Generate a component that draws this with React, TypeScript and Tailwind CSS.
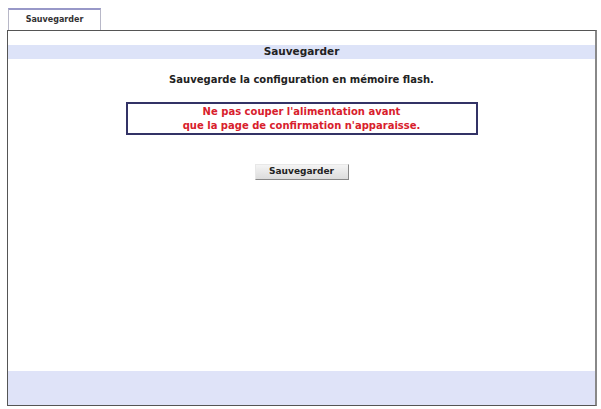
export default function App() {
  return (
    <div className="w-[601px] h-[409px] bg-white pt-2 pl-[7px] font-['DejaVu_Sans',Verdana,sans-serif] text-[#222]">
      <div className="flex">
        <div className="ml-[1px] w-[93px] h-[22px] border border-b-0 border-[#b8b8c8] border-t-2 border-t-[#9898c8] flex items-center justify-center text-[8px] font-bold text-[#333] bg-white">
          Sauvegarder
        </div>
      </div>
      <div className="w-[590px] h-[376px] border border-[#555] border-r-2 border-r-[#888] flex flex-col">
        <div className="h-[14px]" />
        <div className="h-[14px] bg-[#dde3f8] flex items-center justify-center text-[10.5px] font-bold text-[#222]">
          Sauvegarder
        </div>
        <div className="mt-[13px] text-center text-[10px] leading-[15px] font-bold text-[#222]">
          Sauvegarde la configuration en mémoire flash.
        </div>
        <div className="mt-[15px] mx-auto w-[352px] h-[33px] border-2 border-[#333366] flex flex-col items-center justify-center text-[10px] font-bold text-[#d8202c] leading-[14px]">
          <span>Ne pas couper l'alimentation avant</span>
          <span>que la page de confirmation n'apparaisse.</span>
        </div>
        <div className="mt-[29px] flex justify-center">
          <button className="w-[94px] h-[16px] bg-gradient-to-b from-[#f4f4f4] to-[#dcdcdc] border border-[#e8e8e8] border-r-[#888] border-b-[#888] text-[9px] font-bold text-[#222] flex items-center justify-center">
            Sauvegarder
          </button>
        </div>
        <div className="flex-1" />
        <div className="h-[34px] bg-[#dfe3f8]" />
      </div>
    </div>
  );
}
